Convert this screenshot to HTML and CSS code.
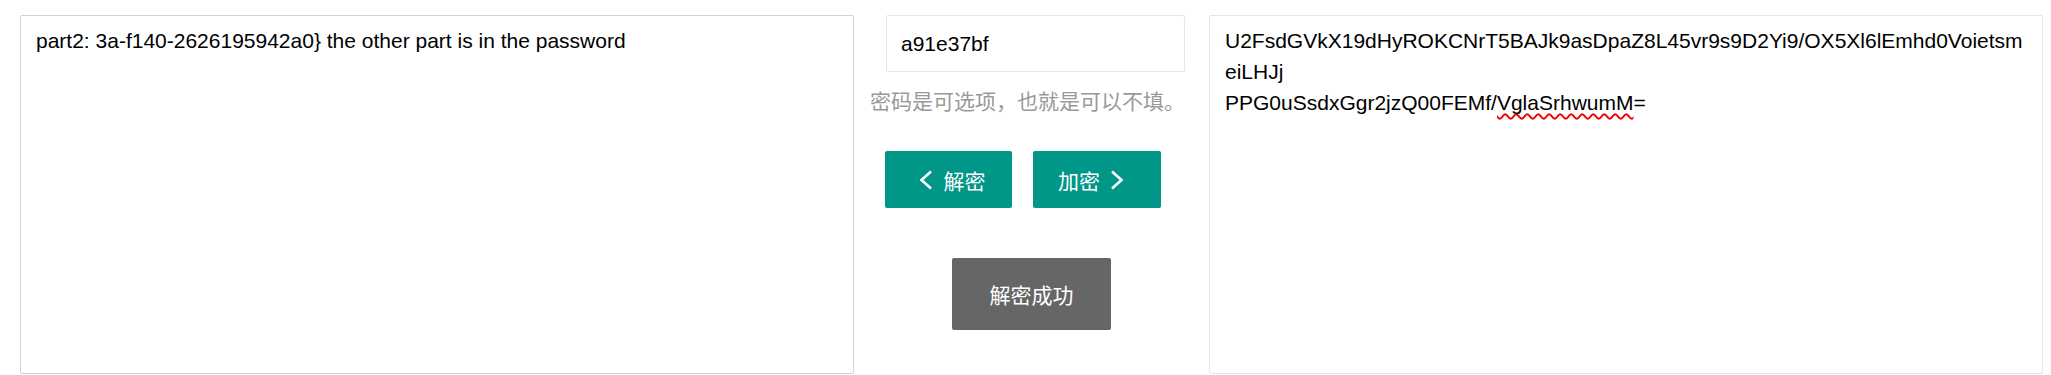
FILE: index.html
```html
<!doctype html>
<html lang="zh-CN">
  <head>
    <meta charset="UTF-8" />
    <title>AES 加密解密</title>
    <link rel="stylesheet" href="styles.css">
  </head>
  <body>
    <div class="page">
      <div class="pane pane-hover">part2: 3a-f140-2626195942a0} the other part is in the password</div>

      <div class="middle">
        <div class="pwd">a91e37bf</div>
        <p class="hint">密码是可选项，也就是可以不填。</p>
        <div class="actions">
          <button class="btn btn-decrypt">
            <svg class="chevron" viewBox="0 0 14 20" width="14" height="20">
              <path d="M12 1.5 L2.5 10 L12 18.5" />
            </svg>
            解密
          </button>
          <button class="btn btn-encrypt">
            加密
            <svg class="chevron" viewBox="0 0 14 20" width="14" height="20">
              <path d="M2 1.5 L11.5 10 L2 18.5" />
            </svg>
          </button>
        </div>
        <div class="toast">解密成功</div>
      </div>

      <div class="pane">U2FsdGVkX19dHyROKCNrT5BAJk9asDpaZ8L45vr9s9D2Yi9/OX5Xl6lEmhd0Voietsm<br>eiLHJj<br>PPG0uSsdxGgr2jzQ00FEMf/<span class="typo">VglaSrhwumM</span>=</div>
    </div>
  </body>
</html>
```

FILE: styles.css
```css
:root {
  --green: #009688;
  --border: #e6e6e6;
  --border-hover: #d2d2d2;
  --text: #000;
  --aux: #999;
}

* {
  box-sizing: border-box;
  margin: 0;
  padding: 0;
}

body {
  font-family: "Liberation Sans", Arial, "Noto Sans CJK SC", sans-serif;
  font-size: 21px;
  color: var(--text);
  background: #fff;
}

.page {
  display: flex;
  padding: 15px 8px 0 20px;
}

.pane {
  flex: 0 0 834px;
  height: 359px;
  padding: 9px 15px;
  border: 1px solid var(--border);
  border-radius: 2px;
  background: #fff;
  line-height: 31px;
  white-space: nowrap;
}

.pane-hover {
  border-color: var(--border-hover);
}

.typo {
  text-decoration: underline wavy #e00;
  text-decoration-thickness: 1.5px;
  text-underline-offset: 3px;
  text-decoration-skip-ink: none;
}

.middle {
  flex: 0 0 355px;
  padding: 0 24px 0 32px;
}

.pwd {
  height: 57px;
  padding-left: 14px;
  border: 1px solid var(--border);
  border-radius: 2px;
  line-height: 55px;
}

.hint {
  margin: 12px 0 0 -16px;
  color: var(--aux);
  font-family: "Noto Sans CJK SC", sans-serif;
  line-height: 32px;
  white-space: nowrap;
}

.actions {
  display: flex;
  gap: 21px;
  margin: 35px 0 0 -1px;
}

.btn {
  display: inline-flex;
  align-items: center;
  justify-content: center;
  gap: 11px;
  width: 127px;
  height: 57px;
  border: none;
  border-radius: 2px;
  background-color: var(--green);
  color: #fff;
  font-family: "Noto Sans CJK SC", sans-serif;
  font-size: 21px;
  cursor: pointer;
}

.btn-decrypt {
  padding-left: 7px;
}

.btn-encrypt {
  width: 128px;
  gap: 10px;
  padding-right: 12px;
}

.chevron {
  flex: none;
  fill: none;
  stroke: #fff;
  stroke-width: 2.6;
}

.toast {
  width: 159px;
  height: 72px;
  margin: 50px 0 0 66px;
  border-radius: 2px;
  background-color: #666;
  color: #fff;
  font-family: "Noto Sans CJK SC", sans-serif;
  line-height: 72px;
  text-align: center;
}
```
